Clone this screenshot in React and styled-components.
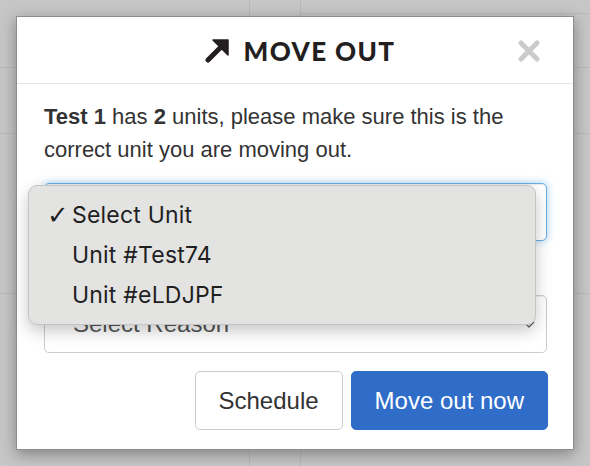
import React from 'react'
import styled, { createGlobalStyle } from 'styled-components'

const GlobalStyle = createGlobalStyle`
  html, body {
    margin: 0;
    padding: 0;
    width: 590px;
    height: 466px;
    overflow: hidden;
  }
  body {
    font-family: "Liberation Sans", Arial, sans-serif;
    background: #c6c6c6;
  }
`

const Page = styled.div`
  position: relative;
  width: 590px;
  height: 466px;
  background-color: #c6c6c6;
  background-image:
    linear-gradient(#b9b9b9, #b9b9b9),
    linear-gradient(#b9b9b9, #b9b9b9),
    linear-gradient(#b9b9b9, #b9b9b9),
    linear-gradient(#b9b9b9, #b9b9b9),
    linear-gradient(#b9b9b9, #b9b9b9),
    linear-gradient(#b9b9b9, #b9b9b9);
  background-repeat: no-repeat;
  background-size: 1px 466px, 1px 466px, 590px 1px, 590px 1px, 590px 1px, 590px 1px;
  background-position: 249px 0, 300px 0, 0 67px, 0 133px, 300px 13px, 0 293px;
`

const Overlay = styled.div`
  position: absolute;
  inset: 0;
  display: flex;
  align-items: center;
  justify-content: center;
`

const Modal = styled.div`
  width: 558px;
  box-sizing: border-box;
  background: #fff;
  border: 1px solid #8d8d8d;
  box-shadow: 0 4px 14px rgba(0, 0, 0, 0.35);
  display: flex;
  flex-direction: column;
`

const Header = styled.div`
  position: relative;
  height: 66px;
  padding-left: 10px;
  border-bottom: 1px solid #e6e6e6;
  display: flex;
  align-items: center;
  justify-content: center;
  gap: 14px;
`

const Title = styled.h4`
  margin: 2px 0 0;
  font-family: "Lato", "Noto Sans", sans-serif;
  font-weight: 900;
  font-size: 26px;
  letter-spacing: 1.4px;
  color: #231f20;
`

const CloseButton = styled.button`
  position: absolute;
  right: 32px;
  top: 22px;
  width: 24px;
  height: 24px;
  padding: 0;
  border: 0;
  background: none;
  cursor: pointer;
`

const Body = styled.div`
  padding: 16px 26px 0 27px;
`

const Message = styled.p`
  margin: 0;
  font-size: 22px;
  line-height: 33px;
  color: #333;
  b {
    font-weight: 700;
  }
`

const Field = styled.div`
  position: relative;
  margin-top: ${p => p.$gap}px;
`

const SelectBox = styled.div`
  height: 58px;
  box-sizing: border-box;
  border: 1px solid ${p => (p.$focused ? '#66afe9' : '#cccccc')};
  border-radius: 5px;
  box-shadow: ${p =>
    p.$focused
      ? 'inset 0 1px 1px rgba(0,0,0,.075), 0 0 8px rgba(102,175,233,.6)'
      : 'inset 0 1px 1px rgba(0,0,0,.075)'};
  background: #fff;
  display: flex;
  align-items: center;
  justify-content: space-between;
  padding: 0 10px 0 28px;
  font-size: 24px;
  color: #555;
`

const Menu = styled.ul`
  position: absolute;
  left: -16px;
  right: 11px;
  top: 2px;
  z-index: 2;
  margin: 0;
  padding: 9px 0;
  list-style: none;
  background: #e3e3e2;
  border: 1px solid #c4c4c4;
  border-radius: 9px;
  box-shadow: 0 6px 16px rgba(0, 0, 0, 0.22);
`

const MenuItem = styled.li`
  height: 40px;
  display: flex;
  align-items: center;
  padding-left: 18px;
  font-family: "Inter", "Noto Sans", sans-serif;
  font-size: 23px;
  letter-spacing: 0.2px;
  color: #1f1f1f;
`

const Check = styled.span`
  width: 25px;
  flex: none;
  font-family: "DejaVu Sans", sans-serif;
  font-size: 26px;
  font-weight: 700;
  visibility: ${p => (p.$on ? 'visible' : 'hidden')};
`

const Footer = styled.div`
  display: flex;
  justify-content: flex-end;
  gap: 8px;
  padding: 18px 25px 19px;
`

const Button = styled.button`
  height: 59px;
  padding: 0 23px;
  border-radius: 5px;
  border: 1px solid ${p => (p.$primary ? '#2e6cc5' : '#cccccc')};
  background: ${p => (p.$primary ? '#2f6dc9' : '#fff')};
  color: ${p => (p.$primary ? '#fff' : '#333')};
  font-family: "Liberation Sans", Arial, sans-serif;
  font-size: 24px;
  cursor: pointer;
`

const Chevron = () => (
  <svg width="14" height="10" viewBox="0 0 14 10">
    <path d="M2 3 L7 8 L12 3" fill="none" stroke="#666" strokeWidth="1.4" />
  </svg>
)

const ArrowIcon = () => (
  <svg width="25" height="25" viewBox="0 0 25 25">
    <path d="M3 22 L17 8" stroke="#231f20" strokeWidth="5" strokeLinecap="round" />
    <path d="M8 2 H23 V17 Z" fill="#231f20" stroke="#231f20" strokeWidth="1.5" strokeLinejoin="round" />
  </svg>
)

const CloseIcon = () => (
  <svg width="24" height="24" viewBox="0 0 24 24">
    <path d="M4 4 L20 20 M20 4 L4 20" stroke="#cbcbcb" strokeWidth="5" strokeLinecap="round" />
  </svg>
)

const units = ['Select Unit', 'Unit #Test74', 'Unit #eLDJPF']

export default function App() {
  return (
    <>
      <GlobalStyle />
      <Page>
        <Overlay>
          <Modal>
            <Header>
              <ArrowIcon />
              <Title>MOVE OUT</Title>
              <CloseButton aria-label="Close">
                <CloseIcon />
              </CloseButton>
            </Header>
            <Body>
              <Message>
                <b>Test 1</b> has <b>2</b> units, please make sure this is the correct unit you are moving out.
              </Message>
              <Field $gap={17}>
                <SelectBox $focused>
                  <span>Select Unit</span>
                  <Chevron />
                </SelectBox>
                <Menu>
                  {units.map((u, i) => (
                    <MenuItem key={u}>
                      <Check $on={i === 0}>✓</Check>
                      {u}
                    </MenuItem>
                  ))}
                </Menu>
              </Field>
              <Field $gap={54}>
                <SelectBox>
                  <span>Select Reason</span>
                  <Chevron />
                </SelectBox>
              </Field>
            </Body>
            <Footer>
              <Button>Schedule</Button>
              <Button $primary>Move out now</Button>
            </Footer>
          </Modal>
        </Overlay>
      </Page>
    </>
  )
}
